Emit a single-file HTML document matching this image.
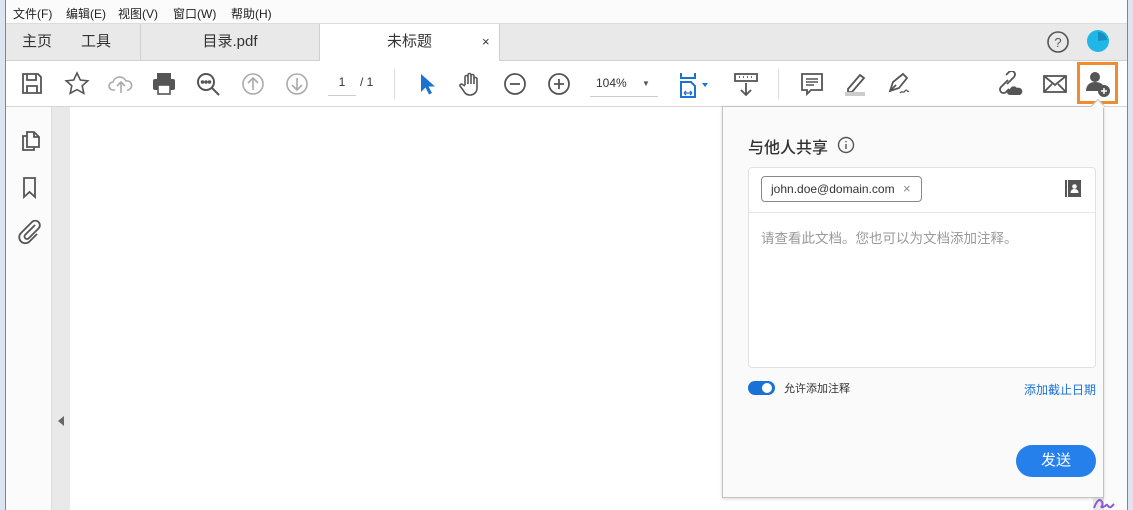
<!DOCTYPE html>
<html><head><meta charset="utf-8"><style>
*{margin:0;padding:0;box-sizing:border-box}
body{width:1133px;height:510px;overflow:hidden;background:#dde6f0;font-family:"Liberation Sans","Noto Sans CJK SC",sans-serif;position:relative}
.abs{position:absolute}
.menu{left:6px;top:0;width:1121px;height:24px;background:#fbfbfb;border-bottom:1px solid #dcdcdc;font-size:12px;color:#222}
.menu span{position:absolute;top:5px}
.tabs{left:6px;top:24px;width:1121px;height:37px;background:#e9e9e9;border-bottom:1px solid #d0d0d0}
.tb{position:absolute;top:0;height:37px;font-size:15px;color:#333;line-height:36px;text-align:center}
.toolbar{left:6px;top:61px;width:1121px;height:46px;background:#fff;border-bottom:1px solid #d6d6d6}
.ic{position:absolute;top:10px}
.main{left:6px;top:107px;width:1121px;height:403px;background:#fff}
</style></head><body>
<div class="abs" style="left:5px;top:0;width:1px;height:510px;background:#7c8793"></div>
<div class="abs" style="left:1127px;top:0;width:1px;height:510px;background:#7c8793"></div>
<div class="abs menu">
<span style="left:7px">文件(F)</span><span style="left:60px">编辑(E)</span><span style="left:112px">视图(V)</span><span style="left:167px">窗口(W)</span><span style="left:225px">帮助(H)</span>
</div>
<div class="abs tabs">
<div class="tb" style="left:16px">主页</div>
<div class="tb" style="left:75px">工具</div>
<div class="tb" style="left:134px;width:180px;border-left:1px solid #d0d0d0;border-right:1px solid #d0d0d0">目录.pdf</div>
<div class="tb" style="left:314px;width:180px;background:#fff;height:38px;border-right:1px solid #d0d0d0">未标题<span style="position:absolute;left:162px;font-size:13px">×</span></div>
<svg class="abs" style="left:1040px;top:6px" width="24" height="24"><circle cx="12" cy="12" r="10" fill="none" stroke="#555" stroke-width="1.6"/><text x="12" y="17" font-size="13" text-anchor="middle" fill="#555" font-family="Liberation Sans">?</text></svg>
<svg class="abs" style="left:1080px;top:5px" width="24" height="24"><circle cx="12" cy="12" r="11" fill="#1fb6e8"/><path d="M12 12 L12 3 A9 9 0 0 1 21 11 Z" fill="#1590c0"/></svg>
</div>
<div class="abs toolbar">
<svg class="ic" style="left:14px" width="24" height="26" fill="none" stroke="#555" stroke-width="1.8"><path d="M3 3h15l3 3v16H3z"/><path d="M7 3v6h9V3M7 22v-7h10v7"/></svg>
<svg class="ic" style="left:58px" width="26" height="26" fill="none" stroke="#555" stroke-width="1.6"><path d="M13 2l3.3 7 7.5.8-5.6 5 1.6 7.5L13 18.6 6.2 22.3l1.6-7.5-5.6-5 7.5-.8z"/></svg>
<svg class="ic" style="left:102px" width="26" height="26" fill="none" stroke="#aaa" stroke-width="1.6"><path d="M7 19H5a4 4 0 010-8 7 7 0 0113-1 4.5 4.5 0 012 9h-1"/><path d="M13 22V12M9 15l4-4 4 4"/></svg>
<svg class="ic" style="left:145px" width="26" height="26"><rect x="6" y="2" width="14" height="6" fill="#555"/><rect x="2" y="8" width="22" height="11" rx="2" fill="#555"/><rect x="7" y="14" width="12" height="9" fill="#fff" stroke="#555" stroke-width="1.6"/></svg>
<svg class="ic" style="left:189px" width="26" height="26" fill="none" stroke="#555" stroke-width="2"><circle cx="11" cy="11" r="8"/><path d="M17 17l7 7"/><circle cx="7.5" cy="11" r=".8" fill="#555"/><circle cx="11" cy="11" r=".8" fill="#555"/><circle cx="14.5" cy="11" r=".8" fill="#555"/></svg>
<svg class="ic" style="left:234px" width="26" height="26" fill="none" stroke="#aaa" stroke-width="1.6"><circle cx="13" cy="13" r="10"/><path d="M13 19V7M8 12l5-5 5 5"/></svg>
<svg class="ic" style="left:278px" width="26" height="26" fill="none" stroke="#aaa" stroke-width="1.6"><circle cx="13" cy="13" r="10"/><path d="M13 7v12M8 14l5 5 5-5"/></svg>
<div class="abs" style="left:322px;top:14px;width:28px;font-size:12px;color:#333;text-align:center;border-bottom:1px solid #ccc;padding-bottom:6px">1</div>
<div class="abs" style="left:354px;top:14px;font-size:12px;color:#333">/ 1</div>
<div class="abs" style="left:388px;top:8px;width:1px;height:30px;background:#ddd"></div>
<svg class="ic" style="left:410px" width="22" height="26"><path d="M5 3v18l4.5-4.5 3.5 7 3-1.5-3.5-6.5H19z" fill="#1a72d4"/></svg>
<svg class="ic" style="left:451px" width="26" height="26" fill="none" stroke="#555" stroke-width="1.6"><path d="M8 14V6a1.5 1.5 0 013 0v7V4a1.5 1.5 0 013 0v9V5a1.5 1.5 0 013 0v8V8a1.5 1.5 0 013 0v9c0 4-3 7-7 7s-5-2-7-5l-3-4a1.5 1.5 0 012.5-1.5L8 15"/></svg>
<svg class="ic" style="left:496px" width="26" height="26" fill="none" stroke="#555" stroke-width="1.8"><circle cx="13" cy="13" r="10"/><path d="M8 13h10"/></svg>
<svg class="ic" style="left:540px" width="26" height="26" fill="none" stroke="#555" stroke-width="1.8"><circle cx="13" cy="13" r="10"/><path d="M8 13h10M13 8v10"/></svg>
<div class="abs" style="left:584px;top:15px;width:68px;font-size:12px;color:#333;border-bottom:1px solid #ccc;padding:0 0 6px 6px">104%<span style="position:absolute;left:52px;font-size:8px;color:#555;top:3px">▼</span></div>
<svg class="ic" style="left:672px" width="36" height="28" fill="none" stroke="#1a72d4" stroke-width="2"><path d="M3 2v5h14V2M3 26V11h10l4 4v11z"/><path d="M6 22h8M6 22l2-2M6 22l2 2M14 22l-2-2M14 22l-2 2" stroke-width="1.3"/><path d="M24 12h6l-3 4z" fill="#1a72d4" stroke="none"/></svg>
<svg class="ic" style="left:726px" width="28" height="26" fill="none" stroke="#555" stroke-width="1.8"><rect x="3" y="3" width="22" height="7"/><path d="M7 6h1M11 6h1M15 6h1M19 6h1M14 12v12M9 19l5 5 5-5"/></svg>
<div class="abs" style="left:772px;top:8px;width:1px;height:30px;background:#ddd"></div>
<svg class="ic" style="left:793px" width="26" height="26" fill="none" stroke="#555" stroke-width="1.8"><path d="M3 3h20v16H12l-4 4v-4H3z"/><path d="M7 8h12M7 11h12M7 14h8" stroke-width="1.4"/></svg>
<svg class="ic" style="left:836px" width="28" height="26"><path d="M6 18l12-14 4 3-12 14H6z" fill="none" stroke="#555" stroke-width="1.8"/><rect x="3" y="21" width="20" height="4" fill="#ccc"/></svg>
<svg class="ic" style="left:880px" width="28" height="26" fill="none" stroke="#555" stroke-width="1.8"><path d="M4 20l3-9 10-8 4 4-8 10z M4 20l6-6"/><path d="M14 22c2-3 3 1 5-2s2 2 4 0" stroke-width="1.3"/></svg>
<svg class="ic" style="left:990px" width="28" height="26"><path d="M12 9l-7 7a3.5 3.5 0 005 5l3-3M11 13l7-7a3.5 3.5 0 00-5-5l-3 3" fill="none" stroke="#555" stroke-width="1.8"/><path d="M14 24a3 3 0 010-6 4 4 0 017-1 3 3 0 013 7z" fill="#555"/></svg>
<svg class="ic" style="left:1036px" width="26" height="26" fill="none" stroke="#555" stroke-width="1.8"><rect x="2" y="5" width="22" height="16"/><path d="M2 5l11 9 11-9M2 21l8-8M24 21l-8-8"/></svg>
<div class="abs" style="left:1071px;top:1px;width:41px;height:42px;border:3px solid #f28a2e"></div>
<svg class="ic" style="left:1078px;top:8px" width="30" height="30"><circle cx="11" cy="8" r="5" fill="#555"/><path d="M2 22c0-6 4-9 9-9s8 2 9 5v4z" fill="#555"/><circle cx="20" cy="22" r="6" fill="#555"/><path d="M20 19v6M17 22h6" stroke="#fff" stroke-width="1.5"/></svg>
</div>
<div class="abs main"></div>
<div class="abs" style="left:6px;top:107px;width:46px;height:403px;background:#fbfbfb;border-right:1px solid #ddd"></div>
<div class="abs" style="left:52px;top:107px;width:18px;height:403px;background:#e9e9e9"></div>
<div class="abs" style="left:58px;top:416px;width:0;height:0;border-top:5px solid transparent;border-bottom:5px solid transparent;border-right:6px solid #666"></div>
<svg class="abs" style="left:19px;top:128px" width="24" height="24" fill="none" stroke="#555" stroke-width="1.8"><path d="M8 4h7l5 5v10H8z M15 4v5h5"/><path d="M8 8H4v14h11v-3"/></svg>
<svg class="abs" style="left:20px;top:176px" width="20" height="24" fill="none" stroke="#555" stroke-width="1.8"><path d="M4 2h11v19l-5.5-5L4 21z"/></svg>
<svg class="abs" style="left:17px;top:220px" width="26" height="26" fill="none" stroke="#555" stroke-width="1.8"><path d="M18 5l-10 10a2.5 2.5 0 003.5 3.5l10-10a4.5 4.5 0 00-6.5-6.5L4 13a6 6 0 008.5 8.5L20 14"/></svg>
<div class="abs" style="left:1103px;top:107px;width:24px;height:403px;background:#fbfbfb;border-left:1px solid #ddd"></div>
<div class="abs" style="left:1093px;top:497px;width:10px;height:13px;background:#eaeaea"></div>
<svg class="abs" style="left:1090px;top:494px" width="28" height="16"><path d="M4 14c3-8 6-10 8-6s-3 6 1 5 3-4 5-1 4 0 6-2" fill="none" stroke="#8b5bd6" stroke-width="2"/></svg>
<div class="abs" style="left:722px;top:106px;width:382px;height:392px;background:#fafafa;border:1px solid #c4c4c4;box-shadow:0 1px 3px rgba(0,0,0,.15)"></div>
<div class="abs" style="left:1093px;top:101px;width:10px;height:10px;background:#fafafa;border-left:1px solid #c4c4c4;border-top:1px solid #c4c4c4;transform:rotate(45deg)"></div>
<div class="abs" style="left:748px;top:134px;font-size:16px;color:#333;font-weight:500">与他人共享</div>
<svg class="abs" style="left:837px;top:136px" width="18" height="18" fill="none" stroke="#555" stroke-width="1.4"><circle cx="9" cy="9" r="7.5"/><path d="M9 8v5M9 5v1.2"/></svg>
<div class="abs" style="left:748px;top:167px;width:348px;height:201px;background:#fff;border:1px solid #e1e1e1;border-radius:4px"></div>
<div class="abs" style="left:749px;top:212px;width:346px;height:1px;background:#e6e6e6"></div>
<div class="abs" style="left:761px;top:176px;width:161px;height:26px;border:1px solid #888;border-radius:4px;font-size:12px;color:#333;padding:5px 0 0 9px">john.doe@domain.com<span style="position:absolute;left:141px;top:4px;color:#888;font-size:13px">×</span></div>
<svg class="abs" style="left:1065px;top:180px" width="17" height="17"><rect x="0" y="0" width="2" height="17" fill="#555"/><rect x="3" y="0" width="13" height="17" fill="#555"/><circle cx="9.5" cy="6.5" r="2.3" fill="#fff"/><path d="M5.5 13c0-3 2-4 4-4s4 1 4 4z" fill="#fff"/></svg>
<div class="abs" style="left:761px;top:227px;font-size:13.5px;color:#999">请查看此文档。您也可以为文档添加注释。</div>
<div class="abs" style="left:748px;top:381px;width:27px;height:14px;border-radius:7px;background:#1a72d4"></div>
<div class="abs" style="left:762px;top:383px;width:10px;height:10px;border-radius:5px;background:#fff"></div>
<div class="abs" style="left:784px;top:380px;font-size:11px;color:#333">允许添加注释</div>
<div class="abs" style="left:1024px;top:381px;font-size:12px;color:#1a72d4">添加截止日期</div>
<div class="abs" style="left:1016px;top:445px;width:80px;height:32px;border-radius:16px;background:#2680eb;color:#fff;font-size:15px;text-align:center;line-height:31px">发送</div>
</body></html>
